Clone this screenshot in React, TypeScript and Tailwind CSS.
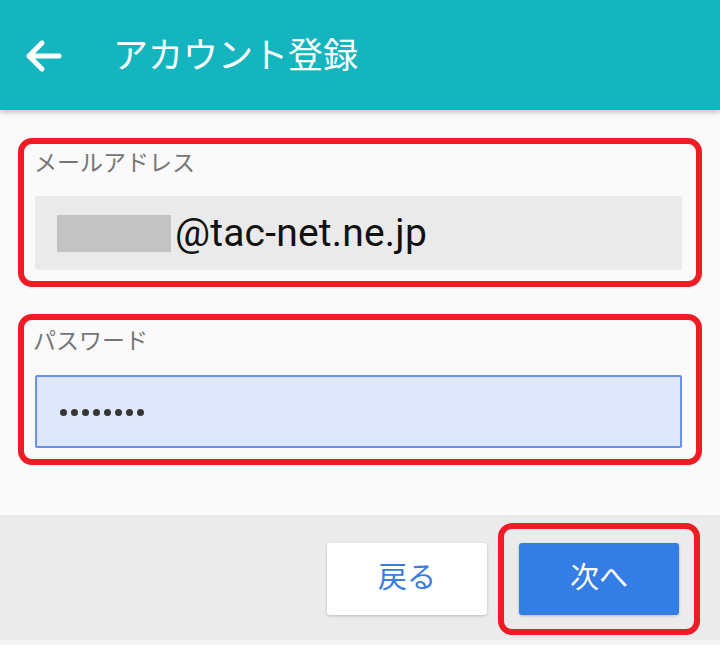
import React from 'react';

const jp = { fontFamily: 'Roboto, "Noto Sans CJK JP", sans-serif' };

export default function App() {
  return (
    <div className="w-[720px] h-[645px] bg-[#fafafa] flex flex-col overflow-hidden" style={jp}>
      <header className="h-[110px] shrink-0 bg-[#14b5be] flex items-center shadow-[0_2px_6px_rgba(0,0,0,0.25)] relative z-10">
        <svg className="ml-[24px] mt-[2px]" width="40" height="36" viewBox="0 0 40 36" fill="none">
          <path d="M5 18H35M18 5L5 18L18 31" stroke="white" strokeWidth="5" strokeLinecap="round" strokeLinejoin="round" />
        </svg>
        <h1 className="ml-[49px] mt-[2px] text-[35px] text-white font-normal leading-none">アカウント登録</h1>
      </header>

      <main className="flex-1 flex flex-col pt-[28px] px-[18px] gap-[27px]">
        <section className="h-[149px] border-[6px] border-[#ee1c25] rounded-[14px] px-[11px] pt-[4px]">
          <label className="block text-[23px] text-[#767676] leading-[32px] -ml-[1px]">メールアドレス</label>
          <div className="mt-[16px] h-[74px] bg-[#eaeaea] rounded-[3px] flex items-center pl-[22px] mr-[3px]">
            <span className="w-[114px] h-[37px] bg-[#c3c3c3]" />
            <span className="ml-[4px] text-[39px] text-[#111] leading-none tracking-[0.2px]">@tac-net.ne.jp</span>
          </div>
        </section>

        <section className="h-[151px] border-[6px] border-[#ee1c25] rounded-[14px] px-[11px] pt-[6px]">
          <label className="block text-[23px] text-[#767676] leading-[32px] -ml-[2px]">パスワード</label>
          <div className="mt-[17px] h-[73px] bg-[#dfe8fa] border-2 border-[#6b8ff0] rounded-[2px] flex items-center gap-[4px] pl-[23px] pt-[2px] mr-[3px]">
            {Array.from({ length: 8 }).map((_, i) => (
              <span key={i} className="w-[7px] h-[7px] rounded-full bg-[#363636]" />
            ))}
          </div>
        </section>
      </main>

      <footer className="h-[130px] shrink-0 bg-[#ebebeb] flex justify-end items-start pt-[8px] pr-[20px] border-b-[5px] border-[#f4f4f4]">
        <button className="mt-[20px] w-[160px] h-[72px] bg-white rounded-[3px] shadow-[0_1px_3px_rgba(0,0,0,0.2)] text-[29px] text-[#3a7be0]">
          戻る
        </button>
        <div className="ml-[11px] border-[6px] border-[#ee1c25] rounded-[14px] px-[15px] py-[14px]">
          <button className="w-[160px] h-[72px] bg-[#347de5] rounded-[3px] shadow-[0_1px_3px_rgba(0,0,0,0.2)] text-[29px] text-white">
            次へ
          </button>
        </div>
      </footer>
    </div>
  );
}
